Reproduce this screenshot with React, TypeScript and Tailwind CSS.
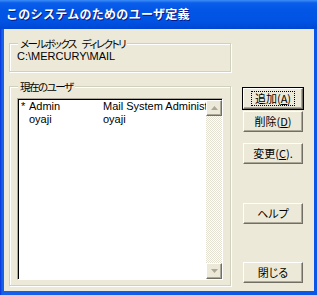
import React from 'react';

const JP = "font-['Noto_Sans_CJK_JP','Noto_Sans',sans-serif]";
const UI = "font-['Liberation_Sans','Noto_Sans_CJK_JP',sans-serif]";

const users = [
  { flag: '*', name: 'Admin', full: 'Mail System Administrator' },
  { flag: '', name: 'oyaji', full: 'oyaji' },
];

// classic raised push button
const Btn: React.FC<{ label: string; accel?: string; tail?: string; isDefault?: boolean; className?: string }> = ({
  label,
  accel,
  tail = '',
  isDefault,
  className = '',
}) => (
  <button
    className={`w-[60px] h-[21px] bg-[#ECE9D8] border border-t-white border-l-white border-r-[#716F64] border-b-[#716F64] flex items-center justify-center text-[11px] leading-none text-black ${JP} [font-feature-settings:'palt'] ${
      isDefault
        ? 'shadow-[0_0_0_1px_#000,inset_-1px_-1px_0_#ACA899]'
        : 'shadow-[inset_-1px_-1px_0_#ACA899]'
    } ${className}`}
  >
    <span
      className={`flex items-center justify-center px-[3px] h-[15px] ${
        isDefault ? 'border border-dotted border-black' : 'border border-transparent'
      }`}
    >
      {label}
      {accel && (
        <>
          (<span className="underline underline-offset-1">{accel}</span>){tail}
        </>
      )}
    </span>
  </button>
);

const Arrow: React.FC<{ down?: boolean }> = ({ down }) => (
  <div className="w-[16px] h-[16px] bg-[#ECE9D8] border border-t-white border-l-white border-r-[#716F64] border-b-[#716F64] shadow-[inset_-1px_-1px_0_#ACA899] flex items-center justify-center">
    <svg width="7" height="4" viewBox="0 0 7 4">
      <polygon points={down ? '0,0 7,0 3.5,4' : '0,4 7,4 3.5,0'} fill="#ACA899" />
    </svg>
  </div>
);

export default function App() {
  return (
    <div className="w-[317px] h-[295px] flex flex-col bg-[linear-gradient(to_right,#0831D9,#1660EA_2px,#0A56E6)] overflow-hidden">
      {/* title bar */}
      <div className="h-[29px] flex items-center pl-[6px] bg-[linear-gradient(to_bottom,#3D8EF7_0%,#0B5EEB_10%,#0256E6_35%,#0052E3_75%,#0046D3_100%)]">
        <span
          className={`text-[12px] tracking-[0.3px] font-bold text-white leading-none ${JP} [text-shadow:1px_1px_0_#0A1883] pb-[1px]`}
        >
          このシステムのためのユーザ定義
        </span>
      </div>

      {/* client area */}
      <div className="flex-1 ml-[4px] mr-[3px] mb-[4px] bg-[#ECE9D8] flex pl-[5px] pt-[8px]">
        <div className="w-[222px] min-w-0 flex flex-col">
          <fieldset className="min-w-0 border border-[#D0D0BF] shadow-[inset_1px_1px_0_#fff,1px_1px_0_#fff] pl-[7px] pb-[8px]">
            <legend
              className={`ml-[1px] px-[2px] bg-[#ECE9D8] text-[10.5px] tracking-[-1.5px] [word-spacing:5px] leading-[13px] ${JP} [font-feature-settings:'palt']`}
            >
              メールボックス ディレクトリ
            </legend>
            <div className={`text-[11px] leading-[13px] ${UI} text-black`}>C:\MERCURY\MAIL</div>
          </fieldset>

          <fieldset className="min-w-0 mt-[8px] border border-[#D0D0BF] shadow-[inset_1px_1px_0_#fff,1px_1px_0_#fff] px-[7px] pb-[5px]">
            <legend
              className={`ml-[1px] px-[2px] bg-[#ECE9D8] text-[10.5px] tracking-[-1.5px] leading-[13px] ${JP} [font-feature-settings:'palt']`}
            >
              現在のユーザ
            </legend>
            <div className="mt-[5px] h-[182px] flex bg-white border border-t-[#ACA899] border-l-[#ACA899] border-r-white border-b-white shadow-[inset_1px_1px_0_#000]">
              <div className="flex-1 min-w-0 pt-[1px] pl-[3px] overflow-hidden">
                {users.map((u) => (
                  <div key={u.name} className={`flex h-[13px] items-center text-[11px] leading-none ${UI} whitespace-nowrap`}>
                    <span className="w-[8px] shrink-0">{u.flag}</span>
                    <span className="w-[74px] shrink-0">{u.name}</span>
                    <span>{u.full}</span>
                  </div>
                ))}
              </div>
              <div className="w-[16px] shrink-0 mt-[1px] flex flex-col bg-[repeating-conic-gradient(#fff_0_25%,#E4E1D2_0_50%)] bg-[length:2px_2px]">
                <Arrow />
                <div className="flex-1" />
                <Arrow down />
              </div>
            </div>
          </fieldset>
        </div>

        <div className="ml-[12px] mt-[51px] flex flex-col">
          <Btn label="追加" accel="A" isDefault />
          <Btn label="削除" accel="D" className="mt-[2px]" />
          <Btn label="変更" accel="C" tail="." className="mt-[11px]" />
          <Btn label="ヘルプ" className="mt-[39px]" />
          <Btn label="閉じる" className="mt-[38px]" />
        </div>
      </div>
    </div>
  );
}
